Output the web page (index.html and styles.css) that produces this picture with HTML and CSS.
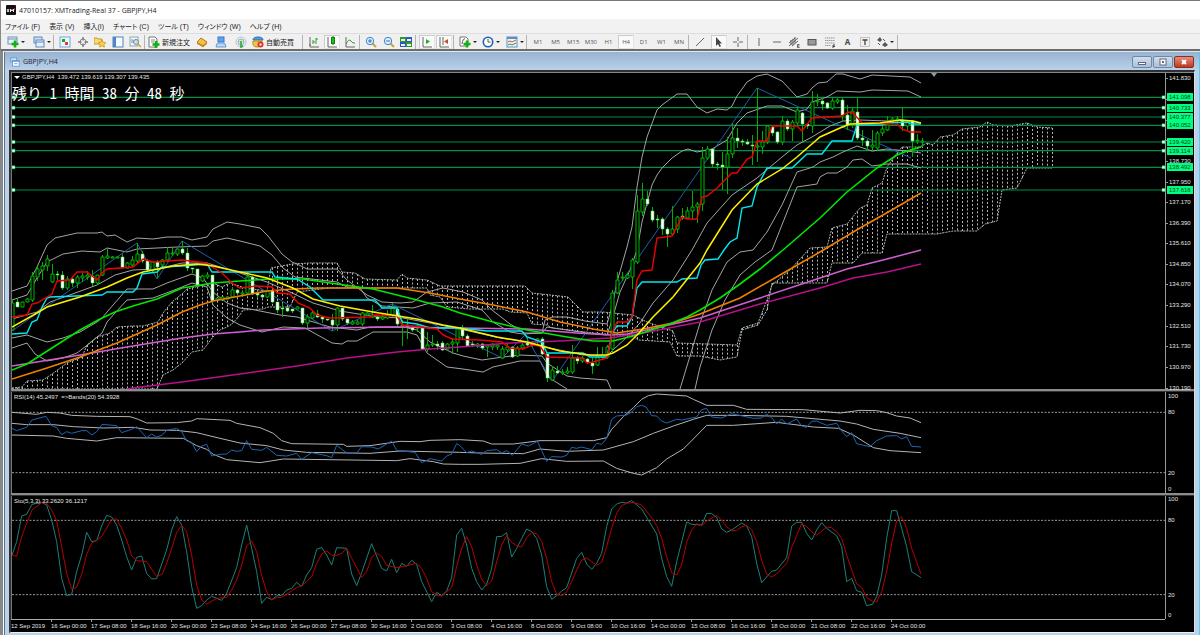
FILE: index.html
```
<!DOCTYPE html>
<html lang="ja">
<head>
<meta charset="utf-8">
<title>47010157: XMTrading-Real 37 - GBPJPY,H4</title>
<link rel="stylesheet" href="styles.css">
</head>
<body>
<div class="app">
  <header class="titlebar">
    <svg class="logo" viewBox="0 0 10 10"><rect width="10" height="10" rx="1" fill="#111"/><path d="M1 4l2 3M3 4L1 7M4.500 7V4l1.500 2 1.500-2v3" stroke="#eee" fill="none"/><path d="M8 3l1 1-1 1" stroke="#d22" fill="none"/></svg>
    <span>47010157: XMTrading-Real 37 - GBPJPY,H4</span>
  </header>
  <nav class="menubar">
    <button>ファイル (F)</button><button>表示 (V)</button><button>挿入(I)</button><button>チャート (C)</button><button>ツール (T)</button><button>ウィンドウ (W)</button><button>ヘルプ (H)</button>
  </nav>
  <div class="toolbar">
    <div class="group g-new">
      <button aria-label="新規チャート" class="split"><svg viewBox="0 0 12 12"><rect x="1" y="1" width="9" height="7" fill="#e8f1fb" stroke="#6a93bd"/><path d="M1 3h9" stroke="#6a93bd"/><path d="M8 4.500v7M4.500 8h7" stroke="#12b012" stroke-width="2.600"/></svg><i></i></button>
      <button aria-label="ウィンドウ一覧" class="split"><svg viewBox="0 0 12 12"><rect x="1" y="1" width="8" height="6" fill="#cfe0f3" stroke="#5d8cc0"/><rect x="3" y="4" width="8" height="7" fill="#e6effa" stroke="#5d8cc0"/><path d="M3 6h8" stroke="#5d8cc0"/></svg><i></i></button>
    </div>
    <div class="group g-view">
      <button aria-label="気配値"><svg viewBox="0 0 12 12"><rect x="1" y="1" width="10" height="10" fill="#eef7ff" stroke="#6fa8dc"/><rect x="3" y="3" width="3" height="3" fill="#18a818"/><rect x="6" y="6" width="3" height="3" fill="#e04028"/></svg></button>
      <button aria-label="データ"><svg viewBox="0 0 12 12"><circle cx="6" cy="6" r="3" fill="none" stroke="#888"/><path d="M6 1v3.500M6 7.500v3.500M1 6h3.500M7.500 6h3.500" stroke="#777" stroke-width="1.400"/></svg></button>
      <button aria-label="ナビゲーター"><svg viewBox="0 0 12 12"><path d="M0 2h3l1 1h4v5H0z" fill="#f6d878" stroke="#c99b28"/><path d="M8 4l1.200 2.400 2.600.3-1.900 1.800.5 2.600L8 9.800l-2.400 1.300.5-2.600-1.900-1.800 2.600-.3z" fill="#ffd83c" stroke="#c08a10" stroke-width=".7"/></svg></button>
      <button aria-label="ターミナル"><svg viewBox="0 0 12 12"><rect x="1" y="1" width="10" height="10" fill="#f4f9ff" stroke="#4f86c4"/><rect x="1" y="1" width="3" height="10" fill="#4f86c4"/></svg></button>
      <button aria-label="ストラテジーテスター"><svg viewBox="0 0 12 12"><rect x="1" y="1" width="8" height="9" fill="#f4f6fa" stroke="#8aa"/><path d="M3 7V3M5 7V4M7 6V3" stroke="#5d8cc0"/><circle cx="7" cy="6" r="2.500" fill="#bfe0f8" stroke="#888"/><path d="M9 8l3 3" stroke="#d9a520" stroke-width="1.500"/></svg></button>
    </div>
    <div class="group g-order">
      <button class="wide"><svg viewBox="0 0 12 12"><path d="M1 1h6l2 2v8H1z" fill="#fff" stroke="#777"/><path d="M3 4h4M3 6h3" stroke="#888"/><path d="M8 5v7M4.500 8.500h7" stroke="#12b012" stroke-width="2.600"/></svg>新規注文</button>
      <button aria-label="MetaEditor"><svg viewBox="0 0 12 12"><path d="M1 6l4-4 6 4-4 5z" fill="#f2c14a" stroke="#b07a18"/><path d="M1 6l6 3 4-3v2l-4 3-6-3z" fill="#c88a20"/></svg></button>
      <button aria-label="チャット"><svg viewBox="0 0 12 12"><rect x="3" y="1" width="6" height="5" fill="#5aa4f0" stroke="#3878c8"/><path d="M1 11q0-4 3-4h4q3 0 3 4z" fill="#b8d8f8" stroke="#6a9ad0"/></svg></button>
      <button aria-label="シグナル"><svg viewBox="0 0 12 12"><circle cx="6" cy="6" r="5" fill="none" stroke="#b4c4d4"/><circle cx="6" cy="6" r="3" fill="#cfe4cf" stroke="#8fb0c4"/><path d="M6 5v6l2-1" stroke="#28a828" stroke-width="1.500" fill="none"/></svg></button>
      <button class="wide"><svg viewBox="0 0 12 12"><path d="M1 4q0-3 5-3t5 3z" fill="#4f9be0" stroke="#2f6fb0"/><path d="M1 5h9q0 6-5 6T1 5z" fill="#f2c84a" stroke="#b88a20"/><circle cx="8.500" cy="8.500" r="3" fill="#e03020"/><rect x="7.500" y="7.500" width="2" height="2" fill="#fff"/></svg>自動売買</button>
    </div>
    <div class="group g-type">
      <button aria-label="バーチャート"><svg viewBox="0 0 12 12"><path d="M2 1v10h9M1 9h2" stroke="#666" fill="none"/><path d="M5 4v4M5 6h2M8 2v6M8 3h2" stroke="#2ca02c"/></svg></button>
      <button aria-label="ローソク足" class="on"><svg viewBox="0 0 12 12"><path d="M2 1v10h9" stroke="#666" fill="none"/><path d="M7 0v9" stroke="#128012"/><rect x="5.500" y="1.500" width="3" height="6" fill="#18c018" stroke="#128012"/></svg></button>
      <button aria-label="ラインチャート"><svg viewBox="0 0 12 12"><path d="M2 1v10h9" stroke="#666" fill="none"/><path d="M2 8q3-6 5-3t4 2" stroke="#2ca02c" fill="none"/></svg></button>
    </div>
    <div class="group g-zoom">
      <button aria-label="拡大"><svg viewBox="0 0 12 12"><path d="M7 7l4 4" stroke="#d0a030" stroke-width="2"/><circle cx="5" cy="5" r="3.700" fill="#dceefc" stroke="#3f84cc"/><path d="M5 3v4M3 5h4" stroke="#2f74bc"/></svg></button>
      <button aria-label="縮小"><svg viewBox="0 0 12 12"><path d="M7 7l4 4" stroke="#d0a030" stroke-width="2"/><circle cx="5" cy="5" r="3.700" fill="#dceefc" stroke="#3f84cc"/><path d="M3 5h4" stroke="#2f74bc"/></svg></button>
      <button aria-label="整列"><svg viewBox="0 0 12 12"><path d="M0 1h6v5H0zM6 6h6v5H6z" fill="#2f9a2f"/><path d="M6 1h6v5H6zM0 6h6v5H0z" fill="#2f58c0"/><path d="M1 3h4v2H1zM7 3h4v2H7zM1 8h4v2H1zM7 8h4v2H7z" fill="#e8f4e8"/></svg></button>
    </div>
    <div class="group g-scroll">
      <button aria-label="自動スクロール" class="on"><svg viewBox="0 0 12 12"><path d="M2 1v10h9" stroke="#666" fill="none"/><path d="M5 3l4 2.500L5 8z" fill="#18b018"/></svg></button>
      <button aria-label="チャートシフト" class="on"><svg viewBox="0 0 12 12"><path d="M2 1v10h9M5 1v8" stroke="#666" fill="none"/><path d="M10 3L6 5.500 10 8z" fill="#c05020"/></svg></button>
    </div>
    <div class="group g-ind">
      <button aria-label="インディケータ" class="split"><svg viewBox="0 0 12 12"><path d="M1 1h6l2 2v7H1z" fill="#fff" stroke="#777"/><path d="M3 8q1-6 3-5" stroke="#555" fill="none"/><path d="M8 4.500v7M4.500 8h7" stroke="#12b012" stroke-width="2.600"/></svg><i></i></button>
      <button aria-label="時間足" class="split"><svg viewBox="0 0 12 12"><circle cx="6" cy="6" r="4.700" fill="#fff" stroke="#2060b0" stroke-width="1.600"/><path d="M6 3v3h2.500" stroke="#555" fill="none"/></svg><i></i></button>
      <button aria-label="定型チャート" class="split"><svg viewBox="0 0 12 12"><rect x="1" y="1" width="10" height="10" fill="#eef4fc" stroke="#5b8fc8"/><path d="M1 2h10" stroke="#5b8fc8" stroke-width="2"/><path d="M2 6l2-1 2 1 4-2" stroke="#d05020" fill="none"/><path d="M2 9l2-1 2 1 4-2" stroke="#2a9a2a" fill="none"/></svg><i></i></button>
    </div>
    <div class="group g-tf">
      <button>M1</button><button>M5</button><button>M15</button><button>M30</button><button>H1</button><button class="on">H4</button><button>D1</button><button>W1</button><button>MN</button>
    </div>
    <div class="group g-cursor">
      <button aria-label="線"><svg viewBox="0 0 12 12"><path d="M2 10l8-8" stroke="#666"/></svg></button>
      <button aria-label="カーソル" class="on"><svg viewBox="0 0 12 12"><path d="M3 1v9l2-2 1.500 3 1.500-.8L6.500 7.500H9z" fill="#444"/></svg></button>
      <button aria-label="十字"><svg viewBox="0 0 12 12"><path d="M6 1v4M6 7v4M1 6h4M7 6h4" stroke="#666"/></svg></button>
    </div>
    <div class="group g-draw">
      <button aria-label="垂直線"><svg viewBox="0 0 12 12"><path d="M6 2v8" stroke="#666"/></svg></button>
      <button aria-label="水平線"><svg viewBox="0 0 12 12"><path d="M2 6h8" stroke="#666"/></svg></button>
      <button aria-label="チャネル"><svg viewBox="0 0 12 12"><path d="M1 7l6-5M1 10l9-8M4 10l6-5M3 4v5M5 3v6M7 1v6" stroke="#555" stroke-width=".9"/><path d="M11.500 8.500H9.500v3h2M9.500 10h2" stroke="#444" fill="none" stroke-width=".8"/></svg></button>
      <button aria-label="長方形"><svg viewBox="0 0 12 12"><rect x="2" y="3.500" width="8" height="5.500" fill="#999" stroke="#555"/></svg></button>
      <button aria-label="フィボナッチ"><svg viewBox="0 0 12 12"><path d="M1 2h10M1 4.500h10M1 7h10M1 9.500h6" stroke="#999" stroke-dasharray="1.500 .5"/><path d="M9 12V9h2M9 10.500h2" stroke="#444" fill="none"/></svg></button>
      <button aria-label="テキスト"><b>A</b></button>
      <button aria-label="ラベル"><svg viewBox="0 0 12 12"><rect x="1.500" y="1.500" width="9" height="9" fill="none" stroke="#999" stroke-dasharray="1 1"/><path d="M3.500 4h5M6 4v5" stroke="#444" stroke-width="1.300"/></svg></button>
      <button aria-label="矢印" class="split"><svg viewBox="0 0 12 12"><path d="M1 4l3-3 2 3-2 2zM6 9l3-3 3 3-3 2z" fill="#555"/><path d="M2 7l2 2M7 3l2 2" stroke="#555"/></svg><i></i></button>
    </div>
  </div>

  <main class="workspace">
    <section class="child">
      <div class="child-title">
        <svg viewBox="0 0 12 12"><rect x="1" y="1" width="7" height="5" fill="#d6e6f8" stroke="#5b94d6"/><rect x="3" y="4" width="8" height="7" fill="#fff" stroke="#5b94d6"/><path d="M3 5h8" stroke="#5b94d6" stroke-width="1.500"/><path d="M5 8h4" stroke="#5b94d6"/></svg>
        <span>GBPJPY,H4</span>
        <div class="controls">
          <button aria-label="最小化"><svg viewBox="0 0 12 8"><rect x="2.500" y="4.500" width="7" height="2" fill="#fff" stroke="#667"/></svg></button>
          <button aria-label="最大化"><svg viewBox="0 0 12 8"><rect x="3" y="1" width="6" height="6" fill="#fff" stroke="#667"/><rect x="5" y="3" width="2" height="2" fill="#667"/></svg></button>
          <button aria-label="閉じる" class="close"><svg viewBox="0 0 12 8"><path d="M4 2l4 4M8 2L4 6" stroke="#fff" stroke-width="1.800"/></svg></button>
        </div>
      </div>
      <div class="chart">
        <div class="pane">
          <svg class="plot" id="price" viewBox="12 73 1153 316" preserveAspectRatio="none"></svg>
          <div class="caption"><span class="caret"></span>GBPJPY,H4&nbsp; 139.472 139.619 139.307 139.435</div>
          <div class="countdown">残り 1 時間 38 分 48 秒</div>
          <div class="axis" id="price-axis"></div>
        </div>
        <div class="divider"></div>
        <div class="pane">
          <svg class="plot" id="rsi" viewBox="36 21 3459 303" preserveAspectRatio="none"></svg>
          <div class="caption">RSI(14) 45.2497&nbsp; =&gt;Bands(20) 54.3928</div>
          <div class="axis" id="rsi-axis"></div>
        </div>
        <div class="divider"></div>
        <div class="pane">
          <svg class="plot" id="sto" viewBox="36 333 3459 369" preserveAspectRatio="none"></svg>
          <div class="caption">Sto(5,3,3) 33.2620 36.1217</div>
          <div class="axis" id="sto-axis"></div>
        </div>
        <div class="times" id="times"></div>
      </div>
    </section>
  </main>
</div>
<script src="chart.js"></script>
</body>
</html>
```
FILE: styles.css
```
* { box-sizing: border-box; }
body { margin: 0; font-family: "Open Sans", "Noto Sans CJK JP", sans-serif; }
button { border: 0; background: none; padding: 0; margin: 0; font: inherit; color: inherit; white-space: nowrap; }

.app { height: 100vh; min-width: 900px; display: flex; flex-direction: column; background: #f0f0f0; border-left: 1px solid #888; border-top: 1px solid #777; overflow: hidden; }

.titlebar { flex: none; height: 18px; display: flex; align-items: center; gap: 3px; padding-left: 5px; background: #fff; color: #222; font-size: 7px; }
.logo { width: 10px; height: 10px; }

.menubar { flex: none; height: 14px; display: flex; align-items: center; gap: 9px; padding-left: 4px; background: #f2f2f2; color: #222; font-size: 7px; font-family: "Liberation Sans", "Noto Sans CJK JP", sans-serif; }
.menubar button { font-feature-settings: "palt"; }

.toolbar { flex: none; height: 16px; display: flex; align-items: center; background: #f0f0f0; border-top: 1px solid #ddd; color: #222; font-size: 7px; padding-left: 3px; }
.group { flex: none; height: 14px; display: flex; align-items: center; justify-content: space-between; border-right: 1px solid #b4b4b4; margin-right: 2px; padding: 0 1px; }
.group button { flex: none; height: 14px; width: 16px; display: flex; align-items: center; justify-content: center; gap: 2px; }
.group svg { width: 12px; height: 12px; flex: none; }
.group .split { width: 21px; }
.group .split i { border: 2px solid transparent; border-top-color: #222; border-bottom: 0; }
.group .wide { width: auto; }
.group .on { background: #fafafa; border: 1px solid #ccc; border-right-color: #e4e4e4; border-bottom-color: #e4e4e4; }
.group b { color: #444; font-size: 8px; }
.g-new { width: 50px; }
.g-view { width: 89px; }
.g-order { width: 156px; padding-right: 8px; }
.g-type { width: 55px; }
.g-zoom { width: 54px; }
.g-scroll { width: 36px; }
.g-ind { width: 71px; }
.g-tf { width: 160px; color: #555; font-size: 6px; }
.g-cursor { width: 57px; }
.g-draw { width: 148px; }

.workspace { flex: 1; min-height: 0; display: flex; background: #808890; border-top: 2px solid #6c6c6c; padding: 0 0 0 2px; }
.child { flex: 1; min-width: 0; display: flex; flex-direction: column; background: #b9d1ea; border-left: 1px solid #fff; border-top: 1px solid #dce8f4; box-shadow: inset 1px 0 #60707f, inset -1px 0 #58c8f0; padding: 0 5px 2px 5px; }
.child-title { flex: none; height: 18px; margin: 0 -4px; padding: 1px 5px 0; display: flex; align-items: center; gap: 3px; background: linear-gradient(#98b2d0, #b9d1ea); color: #223; font-size: 7px; }
.child-title > svg { width: 10px; height: 10px; }
.controls { margin-left: auto; display: flex; gap: 1px; padding-top: 1px; }
.controls button { width: 20px; height: 12px; display: flex; align-items: center; justify-content: center; border: 1px solid #7088a4; border-radius: 2px; background: linear-gradient(#d0deee, #a8c0da); }
.controls svg { width: 12px; height: 8px; }
.controls .close { background: linear-gradient(#e09080, #c03820); border-color: #883020; }

.chart { flex: 1; min-height: 0; display: grid; grid-template-rows: minmax(0, 317fr) 3px minmax(0, 101fr) 3px minmax(0, 123fr) 13px; background: #000; border: solid #303030; border-width: 2px 0 0 2px; border-right: 1px solid #ddd; border-bottom: 1px solid #eee; color: #e4e4e4; font-family: "Liberation Sans", sans-serif; font-size: 6px; line-height: 8px; }
.pane { position: relative; display: grid; grid-template-columns: minmax(0, 1fr) 29px; min-height: 0; border-left: 1px solid #777; }
.pane:first-child { border-top: 1px solid #888; }
.plot { display: block; width: 100%; height: 100%; min-height: 0; overflow: hidden; }
.plot * { vector-effect: non-scaling-stroke; }
.divider { background: #8c8c8c; border-bottom: 1px solid #333; }
.axis { position: relative; border-left: 1px solid #999; }
.axis span { position: absolute; left: 2px; margin-top: -4px; }
.axis .tick { left: 3px; }
.axis .tick::before { content: ""; position: absolute; left: -3px; top: 4px; width: 2px; height: 1px; background: #999; }
.axis .tag { left: 1px; width: 26px; padding-left: 2px; background: #00ff7f; color: #064020; height: 8px; }
.caption { position: absolute; left: 2px; top: 0; display: flex; align-items: center; gap: 2px; }
.pane:not(:first-child) .caption { top: 1px; }
.caret { border: 3px solid transparent; border-top-color: #fff; border-bottom: 0; }
.countdown { position: absolute; left: 0; top: 11px; color: #fff; font: 15px/18px "Noto Sans CJK JP", sans-serif; font-feature-settings: "hwid"; white-space: nowrap; }
.times { display: flex; border-top: 1px solid #aaa; margin-right: 29px; }
.times span { flex: 0 0 calc(100% / 28.85); white-space: nowrap; padding-top: 2px; position: relative; }
.times span + span::before { content: ""; position: absolute; left: 0; top: 0; width: 1px; height: 2px; background: #999; }
```
FILE: chart.js
```
const NS = 'http://www.w3.org/2000/svg';
function add(parent, tag, attrs) {
  const el = document.createElementNS(NS, tag);
  for (const k in attrs) el.setAttribute(k, attrs[k]);
  parent.appendChild(el);
  return el;
}
const line = (svg, points, stroke, width = 1) =>
  add(svg, 'polyline', { points, stroke, 'stroke-width': width, fill: 'none' });
const parse = s => s.trim().split(/\s+/).map(p => p.split(',').map(Number));
function at(pts, x) {
  for (let i = 1; i < pts.length; i++) {
    const [x0, y0] = pts[i - 1], [x1, y1] = pts[i];
    if (x <= x1) return y0 + (y1 - y0) * (x - x0) / (x1 - x0);
  }
  return pts[pts.length - 1][1];
}

/* ---- price pane ---- */
const price = document.getElementById('price');
const levels = [[97.3, '141.098'], [107.7, '140.733'], [117, '140.377'], [125.3, '140.052'], [142, '139.420'], [150.7, '139.114'], [167.3, '138.492'], [190, '137.616']];

const cloudTop = '12,388 22,387 27,381 43,380 52,374 67,363 82,357 87,345 97,337 110,333 117,327 133,326 143,326 158,322 163,313 172,302 183,293 187,289 213,283 222,287 230,283 245,288 267,291 271,268 292,264 310,263 337,263 342,272 355,273 365,279 397,280 402,274 407,278 427,280 440,286 525,286 532,293 568,297 583,312 603,312 633,315 647,322 673,331 677,343 737,345 742,328 758,323 767,300 772,285 790,270 810,248 827,247 832,228 847,224 860,208 867,205 872,188 882,183 887,167 897,153 902,147 920,147 927,143 933,145 940,137 953,135 962,129 980,127 987,122 993,125 1010,126 1027,123 1037,127 1052,128';
const cloudBottom = '12,389 157,389 163,375 173,370 182,363 192,352 203,350 213,337 220,330 227,327 232,324 240,315 243,310 263,309 268,307 290,307 297,292 313,290 330,288 427,288 430,295 440,297 447,307 470,309 503,309 510,312 527,313 532,324 547,325 552,328 593,333 633,336 638,340 670,342 677,356 700,356 720,360 737,357 742,330 758,325 767,310 772,283 827,283 832,263 853,263 862,253 882,253 887,234 937,234 953,231 977,231 985,224 997,221 1002,190 1017,188 1027,168 1052,168';
const top_ = parse(cloudTop), bottom = parse(cloudBottom);
let hatch = '';
for (let x = 12; x <= 1052; x += 5) hatch += `M${x + .5} ${at(top_, x)}V${at(bottom, x)}`;
add(price, 'path', { d: hatch, stroke: '#b4b4b4', 'stroke-dasharray': '2 2', fill: 'none' });
for (const p of [cloudTop, cloudBottom]) line(price, p, '#a8b8b0').setAttribute('stroke-dasharray', '2 1');

for (const [y] of levels) add(price, 'path', { d: `M12 ${y}H1165`, stroke: '#009048', 'stroke-width': 1.2 });

const bands = [
  '12,291 27,286 37,267 47,245 55,238 77,233 97,233 102,232 107,236 115,235 127,242 137,238 153,239 167,237 182,237 192,240 207,237 213,229 227,222 240,224 260,228 268,236 282,254 292,262 297,264 307,269 337,269 347,280 355,286 367,295 382,302 400,303 413,302 427,292 443,288 463,292 482,300 492,310 510,324 517,328 523,333 542,333 545,320 552,317 567,317 585,321 607,324 612,307 617,282 627,247 632,227 637,187 642,157 647,137 657,110 662,105 677,94 687,94 697,107 707,113 717,109 727,110 732,106 737,96 747,82 757,76 767,74 782,81 797,97 807,94 812,88 818,83 827,82 836,74 843,74 860,79 872,75 910,77 921,83',
  '12,300 27,295 37,278 47,262 63,254 82,251 100,252 107,248 127,252 137,249 177,247 207,246 213,241 227,238 240,241 260,246 272,255 283,268 295,277 303,278 337,282 347,287 360,288 367,298 382,306 413,308 430,303 457,302 482,310 493,322 510,332 523,334 542,333 547,327 567,330 587,333 607,335 612,320 620,292 630,270 637,250 642,222 647,203 652,185 657,175 662,168 672,158 682,151 688,149 697,152 712,149 727,140 737,123 747,113 767,106 782,106 797,112 807,109 812,102 827,97 837,91 860,92 872,90 908,91 921,97',
  '12,319 37,312 50,302 67,296 97,285 115,275 133,270 157,269 182,263 207,263 240,273 267,282 290,292 313,303 340,311 377,317 403,318 430,323 460,329 500,338 527,342 550,348 583,355 607,356 613,350 627,337 640,323 653,303 673,280 692,250 707,223 732,195 757,178 782,157 797,145 812,137 830,126 843,121 860,120 887,121 902,120 921,123',
  '12,338 27,335 47,342 63,338 80,332 97,322 102,318 107,312 127,289 153,289 167,283 192,274 203,278 213,292 227,303 240,308 250,309 280,315 297,317 330,327 357,330 370,327 403,327 417,330 430,342 453,353 463,356 482,360 503,357 520,355 542,356 547,363 567,376 580,378 607,380 611,389',
  '680,389 700,323 712,290 727,262 740,252 753,250 767,232 782,205 797,172 813,167 820,162 833,157 843,152 857,146 872,151 887,149 907,151 921,153',
  '12,348 27,343 35,354 47,361 63,358 77,353 90,343 102,333 107,322 115,313 127,300 153,298 177,289 192,283 207,287 213,305 227,318 240,325 262,332 283,327 305,328 332,343 342,344 347,341 357,341 373,332 407,332 417,335 427,353 447,367 463,369 483,372 493,367 520,361 540,361 548,377 567,389',
  '695,389 700,367 712,330 725,300 740,275 755,262 772,250 797,187 817,184 820,177 827,173 837,173 847,167 853,160 862,159 872,166 887,164 907,164 921,168',
];
bands.forEach(b => line(price, b, '#a4a4a4'));

line(price, '12,331 137,243 157,279 182,241 332,331 392,304 502,358 525,335 552,381 757,88 911,158', '#205fa8');

/* kind (u = up, d = down), body top, body bottom, high, low */
const candles = `u303,330,300,331 d302,307,298,307 u302,307,302,307 u299,302,298,302 u276,300,272,302 u269,277,266,281 u266,270,262,280 u259,266,255,271 u274,282,264,283 d274,275,271,280
d275,288,271,290 u279,288,276,290 d279,283,276,287 u277,283,275,288 u276,278,273,282 u275,277,271,280 d276,283,270,286 u275,283,275,285 u257,275,255,276 u256,258,249,259
u257,258,256,258 u257,258,256,258 d257,268,254,268 u263,268,262,268 u260,265,256,267 u254,261,243,263 d254,261,251,263 d261,270,259,272 u262,270,262,272 d262,267,260,278
u260,265,259,268 u253,260,247,262 u253,254,248,256 u249,254,249,256 d249,253,241,255 d253,268,248,271 d268,269,268,273 d269,285,269,286 u276,281,275,282 u275,277,272,279
d275,301,275,303 u298,300,298,301 u297,300,297,300 u297,299,297,299 u290,297,287,298 d290,293,289,295 u293,294,290,297 u277,293,272,294 d277,294,276,295 d293,295,293,298
d295,297,295,298 u291,297,290,298 d291,302,290,303 d302,310,302,313 d308,309,303,317 d308,311,307,312 d309,311,309,313 u307,309,306,309 d308,323,308,325 u317,323,314,330
u313,318,311,319 d314,317,310,318 d317,319,317,323 d319,320,319,321 d320,325,314,331 u308,325,307,331 d308,319,308,321 d319,323,318,325 u322,324,320,325 u322,324,320,325
u313,324,312,326 u313,315,312,316 u315,317,305,318 d317,319,315,321 u317,319,314,320 u315,318,310,319 u308,315,303,317 d309,324,309,326 u325,326,320,346 d325,327,317,339
d327,330,325,332 u326,328,325,332 d328,349,328,350 u345,349,332,352 u344,345,335,347 d344,346,341,350 d343,350,341,351 u344,349,343,351 u342,344,338,354 u329,343,328,352
d329,336,325,338 d336,346,334,347 d344,345,341,347 u344,346,343,348 d344,348,343,350 u345,347,344,357 u345,347,343,350 u345,347,344,350 u349,358,346,359 u347,350,343,352
d347,357,346,358 u348,356,346,357 u345,348,343,350 d343,345,337,346 d343,345,341,347 u339,342,338,345 d339,354,337,355 d354,378,354,382 u370,380,366,381 d371,373,366,374
u372,373,369,375 u371,373,367,374 u358,372,345,374 d358,361,356,364 u358,361,356,363 d359,362,358,364 d363,366,358,374 u357,365,347,366 u355,357,347,360 u347,357,345,359
u293,349,290,353 u280,293,272,294 u277,278,272,281 u275,278,273,279 u260,277,258,289 u211,262,195,264 u199,212,183,216 d199,204,191,206 d211,220,207,222 d219,220,215,228
d219,229,217,235 d229,234,227,247 u229,234,206,236 u217,229,216,233 d216,218,208,220 u211,218,207,219 u207,211,191,220 u204,207,202,223 u158,204,147,211 u149,158,146,160
d149,164,148,168 d164,165,162,170 d165,167,152,190 u154,167,137,194 u138,154,123,158 d138,141,128,148 d141,142,139,146 d142,144,139,145 d145,146,135,165 u146,147,88,162
u142,147,131,154 u126,142,125,144 d127,133,125,136 d132,142,131,144 u121,142,116,145 d121,129,119,131 u122,129,120,141 u110,123,107,125 d113,124,112,142 d124,126,123,129
u102,126,91,133 u101,102,94,106 d101,104,98,110 d103,108,102,109 u101,108,98,110 u100,102,98,104 d100,115,98,122 d115,125,105,130 u111,125,108,128 d112,138,98,140
d138,140,130,146 d141,146,139,151 u145,147,130,151 u133,148,131,151 u129,133,126,136 u125,130,116,131 u119,121,117,124 u119,121,116,124 d121,126,108,131 u122,126,120,130
d121,141,120,157 u140,141,134,144 u141,142,138,147`.trim().split(/\s+/);
let wicks = '';
candles.forEach((c, i) => { const v = c.slice(1).split(','); wicks += `M${12.5 + 5 * i} ${v[2]}V${v[3]}`; });
add(price, 'path', { d: wicks, stroke: '#00b000', fill: 'none' });
candles.forEach((c, i) => {
  const v = c.slice(1).split(',').map(Number), down = c[0] === 'd';
  add(price, 'rect', { x: 11 + 5 * i, y: v[0], width: 3, height: Math.max(1, v[1] - v[0]), fill: down ? '#fff' : '#000', stroke: down ? '#40d840' : '#00b800', 'stroke-width': down ? .6 : 1 });
});

line(price, '127,389 133,388 182,382 240,374 297,366 347,358 397,352 430,349 460,347 510,343 560,341 610,338 643,333 700,322 760,304 820,288 853,278 887,272 921,264', '#b8108c', 1.5);
line(price, '12,366 80,355 133,346 182,338 213,334 240,332 263,330 320,328 397,327 460,328 527,329 577,333 610,335 627,334 660,327 700,318 760,298 820,278 847,269 887,259 921,250', '#d060d0', 1.5);
line(price, '12,379 47,368 80,357 117,343 157,325 182,312 200,305 213,301 240,296 267,291 293,289 320,288 397,288 430,293 460,299 493,305 527,312 560,322 593,329 617,333 643,329 673,323 700,314 740,298 780,275 820,252 860,228 890,211 921,193', '#f08000', 1.6);
line(price, '12,370 27,364 52,348 80,330 100,319 115,312 133,306 157,299 182,288 213,283 240,281 270,279 303,279 330,283 373,289 417,300 443,307 460,313 493,322 527,330 567,337 593,341 613,341 633,336 667,325 687,317 700,310 720,298 740,284 760,269 783,250 820,218 847,192 877,168 897,155 907,151 921,147', '#00e800', 1.6);
line(price, '12,334 27,333 32,322 37,320 42,307 47,298 50,297 102,295 107,292 133,292 137,288 142,274 157,272 162,267 182,266 207,264 212,272 272,272 275,277 297,279 310,287 323,300 375,300 382,308 397,308 402,322 417,324 430,328 460,328 487,331 522,331 527,337 542,342 547,353 583,353 590,357 607,357 612,333 617,326 627,326 632,317 637,288 642,282 677,282 682,279 697,278 701,265 705,260 718,259 724,250 730,242 737,238 742,208 752,206 757,187 767,168 792,168 807,154 822,154 832,141 852,141 857,125 882,125 888,123 907,122 912,124 921,124', '#00e8f0', 1.4);
line(price, '12,317 27,315 32,304 37,303 52,294 57,281 70,280 77,272 87,272 97,280 102,273 107,269 133,267 143,259 153,262 182,260 207,263 212,267 222,273 233,284 240,288 257,286 272,287 277,293 290,294 298,303 310,308 317,315 330,318 370,317 375,315 397,316 402,325 413,326 437,329 443,335 452,339 480,340 502,342 510,348 523,349 532,345 540,346 547,357 582,358 587,363 593,362 607,358 612,333 617,322 627,322 632,317 637,280 642,271 652,270 657,238 672,236 682,217 687,219 697,219 702,197 707,196 717,188 732,173 737,173 747,159 752,157 757,141 767,141 772,126 797,126 802,131 812,118 842,116 848,112 853,113 862,123 897,124 902,129 910,132 921,132', '#f00000', 1.4);
line(price, '12,327 37,313 47,307 80,297 107,287 127,278 143,272 173,266 197,264 213,266 240,272 267,278 293,288 313,299 340,306 373,312 417,319 443,325 460,328 497,337 527,342 560,351 590,355 607,355 613,353 627,345 640,332 653,317 673,297 700,263 707,250 732,210 757,184 782,169 797,157 820,137 840,128 850,124 880,123 900,120 913,121 921,123', '#fff000', 1.5);

for (const [y] of levels) for (const x of [12, 1162]) add(price, 'rect', { x, y: y - 1.5, width: 3, height: 3, fill: '#e0ffe8', stroke: '#00c060', 'stroke-width': .5 });
add(price, 'path', { d: 'M931 73h6l-3 4z', fill: '#8898a8' });

/* ---- oscillator panes: points are in thirds of a unit ---- */
function osc(svg, left, right, stroke) {
  line(svg, left + ' ' + parse(right).map(([x, y]) => `${x + 1380},${y}`).join(' '), stroke);
}
function guides(svg, ys) {
  for (const y of ys) add(svg, 'path', { d: `M36 ${y}H3495`, stroke: '#999', 'stroke-dasharray': '2 1.500' });
}
const rsi = document.getElementById('rsi');
guides(rsi, [82, 263]);
osc(rsi, '36,82 110,88 140,82 180,84 215,91 290,94 390,95 415,103 440,114 530,113 575,108 590,101 690,106 710,115 780,128 820,145 845,167 875,176 1030,178 1040,184 1110,182 1200,169 1260,170 1290,166 1379,164', '0,164 70,168 95,177 160,177 240,167 400,167 440,158 455,133 490,95 520,68 545,43 565,32 590,27 680,33 700,43 740,61 820,61 860,73 1030,74 1140,84 1200,76 1250,77 1280,83 1310,93 1350,99 1383,113', '#b4b4b4');
osc(rsi, '36,115 80,119 160,119 220,125 310,129 400,127 450,135 530,136 590,143 660,160 720,174 800,182 850,195 920,202 1110,205 1200,198 1379,202', '60,204 190,206 240,192 320,199 430,195 520,170 580,145 640,123 700,103 740,91 830,91 980,94 1140,108 1190,117 1240,133 1320,145 1383,158', '#b4b4b4');
osc(rsi, '36,150 160,153 200,160 290,168 350,158 550,160 590,182 620,193 640,208 680,224 780,233 850,222 1190,227 1230,221 1300,230 1330,237 1379,238', '60,238 180,235 245,221 320,229 430,228 470,250 520,265 545,270 590,248 620,222 670,192 700,162 740,121 820,121 950,112 1060,126 1135,130 1180,150 1240,188 1290,197 1383,203', '#b4b4b4');
osc(rsi, '36,130 50,137 80,127 96,105 138,94 155,122 170,128 185,149 200,140 215,145 245,137 260,137 276,150 290,140 306,118 350,122 365,143 395,133 410,125 440,158 455,147 470,156 487,150 500,136 530,130 545,140 560,168 575,172 590,200 605,183 620,178 635,213 660,208 680,207 695,195 710,199 725,197 740,167 755,193 785,196 800,187 830,211 860,213 890,205 905,223 935,203 980,212 995,218 1010,181 1040,204 1070,204 1085,185 1115,186 1135,192 1175,168 1190,196 1245,202 1265,233 1290,221 1325,228 1340,213 1355,207 1370,176', '0,182 20,203 35,198 65,208 80,197 110,194 125,204 140,197 157,211 185,177 205,183 232,169 245,197 260,229 275,215 305,216 320,211 335,187 350,190 365,186 395,194 410,175 425,178 440,160 455,103 470,93 500,90 515,81 530,65 545,61 558,66 575,92 590,93 605,108 620,114 650,103 665,105 710,96 725,74 740,70 755,96 785,99 815,86 880,100 905,99 920,87 935,98 950,117 965,102 980,117 1010,102 1025,123 1040,127 1055,109 1070,108 1100,121 1130,115 1145,138 1160,155 1175,143 1190,176 1230,185 1250,167 1280,153 1310,152 1325,162 1340,155 1355,184 1383,186', '#1e66b8');

const sto = document.getElementById('sto');
guides(sto, [406, 629]);
osc(sto, '36,510 50,470 65,393 80,388 96,358 125,352 140,360 155,405 170,470 185,580 200,632 215,628 230,560 245,510 260,442 275,470 290,467 305,423 320,391 335,396 350,420 365,465 380,515 395,555 410,517 425,513 440,565 455,582 470,581 500,495 515,435 530,395 545,420 560,500 575,605 590,670 605,662 620,645 635,634 665,646 680,625 710,548 725,480 740,420 755,490 770,560 785,655 800,637 815,644 830,633 845,631 860,615 875,610 890,592 905,604 920,570 935,548 950,493 965,487 980,510 995,540 1010,488 1040,490 1055,567 1070,602 1085,563 1115,476 1145,550 1160,558 1175,523 1190,563 1205,535 1220,544 1235,526 1250,538 1265,590 1295,650 1310,622 1325,632 1340,618 1355,578 1370,450', '5,430 20,480 35,550 50,590 65,615 80,598 95,550 110,455 125,454 140,443 155,516 170,490 200,432 215,440 230,460 245,510 260,605 275,643 290,632 305,618 320,608 350,520 365,502 380,537 395,553 410,535 425,505 440,425 455,372 470,357 485,352 500,354 515,347 545,372 590,447 605,520 620,575 635,604 650,530 680,411 695,418 725,420 740,385 755,386 770,397 785,432 800,442 815,435 845,414 860,423 875,455 890,535 905,593 935,559 950,555 980,518 995,423 1010,412 1025,412 1040,445 1055,465 1070,435 1085,413 1100,430 1130,452 1145,485 1160,590 1175,580 1190,617 1205,622 1220,662 1237,658 1250,635 1265,570 1280,460 1295,377 1310,377 1325,430 1340,485 1355,560 1383,578', '#1c8078');
osc(sto, '36,510 50,514 65,455 80,415 96,375 125,353 140,355 155,375 170,407 185,485 200,565 215,613 230,607 245,568 260,508 275,475 305,455 335,403 350,402 365,430 380,465 395,512 410,527 440,530 470,575 487,567 500,535 515,490 530,442 545,421 560,440 575,510 590,600 605,645 620,657 650,640 680,637 695,615 710,585 725,540 740,483 755,468 770,500 785,572 800,620 815,645 830,638 845,637 890,608 905,602 935,575 950,535 965,508 980,498 995,511 1010,511 1025,505 1040,490 1055,520 1085,577 1100,560 1115,517 1130,504 1145,515 1160,541 1190,548 1220,542 1250,535 1265,550 1280,580 1295,620 1310,630 1325,633 1355,608 1370,545', '5,490 20,455 35,485 50,540 65,582 80,602 95,588 110,530 125,480 140,452 155,472 170,482 185,486 200,458 215,443 230,446 245,470 260,520 275,590 290,627 305,632 320,620 335,590 350,555 365,525 380,519 395,530 410,541 425,532 440,485 455,430 470,385 485,362 500,355 520,352 545,360 575,398 590,422 605,460 620,515 635,563 650,570 665,540 680,472 695,435 710,416 725,422 740,408 770,391 785,405 800,425 815,437 830,436 845,425 860,421 875,434 890,470 905,525 920,568 935,576 950,567 980,535 995,488 1025,416 1040,425 1055,440 1070,450 1100,426 1115,428 1130,440 1145,460 1160,510 1190,597 1205,607 1220,637 1237,649 1250,651 1265,620 1280,560 1295,475 1310,408 1325,395 1340,430 1355,490 1383,567', '#b80000');

/* ---- axes ---- */
function label(id, share, text, cls) {
  const s = document.createElement('span');
  s.textContent = text;
  if (cls) s.className = cls;
  s.style.top = (share * 100).toFixed(2) + '%';
  document.getElementById(id).appendChild(s);
}
['141.830', '141.050', '140.270', '139.490', '138.730', '137.950', '137.170', '136.390', '135.610', '134.850', '134.070', '133.290', '132.510', '131.730', '130.970', '130.190']
  .forEach((t, i) => label('price-axis', (5.5 + i * 20.6) / 316, t, 'tick'));
levels.forEach(([y, t]) => label('price-axis', (y - 73) / 316, t, 'tag'));
[['100', 4], ['80', 20], ['20', 81], ['0', 97]].forEach(([t, y]) => label('rsi-axis', y / 101, t));
[['100', 3], ['80', 24], ['20', 99], ['0', 119]].forEach(([t, y]) => label('sto-axis', y / 123, t));
['12 Sep 2019', '16 Sep 00:00', '17 Sep 08:00', '18 Sep 16:00', '20 Sep 00:00', '23 Sep 08:00', '24 Sep 16:00', '26 Sep 00:00', '27 Sep 08:00', '30 Sep 16:00', '2 Oct 00:00', '3 Oct 08:00', '4 Oct 16:00', '8 Oct 00:00', '9 Oct 08:00', '10 Oct 16:00', '14 Oct 00:00', '15 Oct 08:00', '16 Oct 16:00', '18 Oct 00:00', '21 Oct 08:00', '22 Oct 16:00', '24 Oct 00:00']
  .forEach(t => { const s = document.createElement('span'); s.textContent = t; document.getElementById('times').appendChild(s); });
```
